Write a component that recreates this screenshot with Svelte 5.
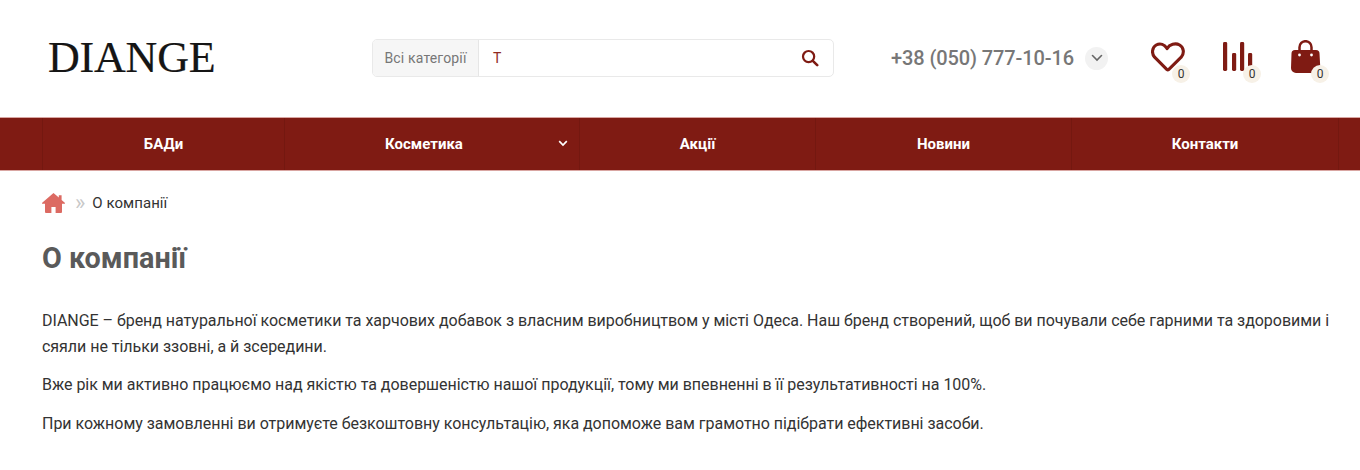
<script>
  const navItems = [
    { label: 'БАДи', width: 242 },
    { label: 'Косметика', width: 295, arrow: true },
    { label: 'Акції', width: 236 },
    { label: 'Новини', width: 256 },
    { label: 'Контакти', width: 268 }
  ];
  const tools = ['heart', 'chart', 'bag'];
</script>

<div class="page">
  <header class="top">
    <div class="logo">DIANGE</div>
    <div class="search">
      <div class="cat">Всі категорії</div>
      <div class="field">
        <span class="typed">Т</span>
        <svg class="glass" viewBox="0 0 18 18" width="18" height="18" aria-hidden="true">
          <circle cx="7.6" cy="7.6" r="5.6" fill="none" stroke="#7f1b13" stroke-width="2.2" />
          <path d="M11.8 11.8 L16.2 16.2" stroke="#7f1b13" stroke-width="2.6" stroke-linecap="round" />
        </svg>
      </div>
    </div>
    <div class="phone">
      <span>+38 (050) 777-10-16</span>
      <span class="drop">
        <svg viewBox="0 0 12 8" width="12" height="8" aria-hidden="true">
          <path d="M1.5 1.5 L6 6 L10.5 1.5" fill="none" stroke="#666" stroke-width="1.6" stroke-linecap="round" />
        </svg>
      </span>
    </div>
    <div class="tools">
      {#each tools as t}
        <div class="tool {t}">
          {#if t === 'heart'}
            <svg viewBox="0 0 34 30" width="34" height="30" aria-hidden="true">
              <path d="M16 27.6 L3.6 15.2 C0.2 11.2 1.2 5.2 5.2 3 C9.2 0.8 13.6 2.4 16 6.6 C18.6 2.4 24.4 0.6 28.6 3 C32.8 5.4 33.6 11.2 30.2 15.2 L17.6 27.6 Q16.8 28.3 16 27.6 Z" fill="none" stroke="#7f1b13" stroke-width="3.1" stroke-linejoin="round" />
            </svg>
          {:else if t === 'chart'}
            <svg viewBox="0 0 31 30" width="31" height="30" aria-hidden="true">
              <rect x="0" y="0" width="4.2" height="29" rx="1.4" fill="#7f1b13" />
              <rect x="9" y="11" width="4.2" height="18" rx="1.4" fill="#7f1b13" />
              <rect x="17" y="0" width="4.2" height="29" rx="1.4" fill="#7f1b13" />
              <rect x="25" y="11" width="4.2" height="18" rx="1.4" fill="#7f1b13" />
            </svg>
          {:else}
            <svg viewBox="0 0 30 34" width="30" height="34" aria-hidden="true">
              <path d="M8.5 12 V7.2 a6 6 0 0 1 12 0 V12" fill="none" stroke="#7f1b13" stroke-width="2.5" />
              <path d="M4 10 H25 a3.5 3.5 0 0 1 3.5 3.5 L29.3 28 a5 5 0 0 1 -5 5 H5 a5 5 0 0 1 -5 -5 L0.5 13.5 a3.5 3.5 0 0 1 3.5 -3.5 Z" fill="#7f1b13" />
              <circle cx="8.5" cy="15" r="1.4" fill="#fff" />
              <circle cx="20.5" cy="15" r="1.4" fill="#fff" />
            </svg>
          {/if}
          <span class="count">0</span>
        </div>
      {/each}
    </div>
  </header>

  <nav class="nav">
    <div class="nav-inner">
      {#each navItems as item}
        <a class="nav-item" class:has-arrow={item.arrow} href="#top" style="width: {item.width}px">
          {item.label}
          {#if item.arrow}
            <svg class="nav-arrow" viewBox="0 0 10 7" width="10" height="7" aria-hidden="true">
              <path d="M1.2 1.2 L5 5 L8.8 1.2" fill="none" stroke="#fff" stroke-width="1.7" />
            </svg>
          {/if}
        </a>
      {/each}
    </div>
  </nav>

  <main class="content">
    <div class="crumbs">
      <svg viewBox="0 0 23 20" width="23" height="20" aria-hidden="true">
        <path d="M11.5 0 L16.8 4.6 V2.2 H19.6 V7 L22.8 9.8 Q23.4 10.8 22.4 10.8 H20 V19 Q20 20 19 20 H13.6 V14 H9.4 V20 H4 Q3 20 3 19 V10.8 H0.6 Q-0.4 10.8 0.2 9.8 Z" fill="#dc6a62" />
      </svg>
      <span class="sep">»</span>
      <span class="here">О компанії</span>
    </div>
    <h1>О компанії</h1>
    <p>DIANGE – бренд натуральної косметики та харчових добавок з власним виробництвом у місті Одеса. Наш бренд створений, щоб ви почували себе гарними та здоровими і сяяли не тільки ззовні, а й зсередини.</p>
    <p>Вже рік ми активно працюємо над якістю та довершеністю нашої продукції, тому ми впевненні в її результативності на 100%.</p>
    <p>При кожному замовленні ви отримуєте безкоштовну консультацію, яка допоможе вам грамотно підібрати ефективні засоби.</p>
  </main>
</div>

<style>
  :global(body) {
    margin: 0;
    background: #fff;
    font-family: Roboto, "Noto Sans", sans-serif;
    color: #333;
  }
  .page {
    width: 1360px;
    height: 470px;
    overflow: hidden;
  }
  .top {
    height: 117px;
    display: flex;
    align-items: center;
    padding-left: 48px;
    box-sizing: border-box;
  }
  .logo {
    font-family: "Liberation Serif", serif;
    font-size: 44px;
    line-height: 1;
    color: #151515;
    width: 324px;
    margin-top: -1px;
    -webkit-text-stroke: 0.2px #151515;
    letter-spacing: -0.2px;
  }
  .search {
    display: flex;
    width: 462px;
    height: 38px;
    margin-top: -1px;
    border: 1px solid #e9e9e9;
    border-radius: 5px;
    box-sizing: border-box;
    overflow: hidden;
  }
  .cat {
    width: 106px;
    background: #f6f6f6;
    border-right: 1px solid #e6e6e6;
    color: #777;
    font-size: 14px;
    letter-spacing: 0.15px;
    display: flex;
    align-items: center;
    justify-content: center;
    box-sizing: border-box;
  }
  .field {
    flex: 1;
    display: flex;
    align-items: center;
    justify-content: space-between;
    padding: 0 14px;
  }
  .typed {
    color: #8f2a22;
    font-size: 14px;
  }
  .phone {
    margin-left: 57px;
    margin-bottom: 1px;
    display: flex;
    align-items: center;
    gap: 11px;
    font-size: 20px;
    font-weight: 500;
    letter-spacing: -0.1px;
    color: #777;
    width: 260px;
  }
  .drop {
    width: 23px;
    height: 23px;
    border-radius: 50%;
    background: #f2f2f2;
    display: flex;
    align-items: center;
    justify-content: center;
  }
  .tools {
    display: flex;
    gap: 37px;
  }
  .tool {
    position: relative;
    height: 34px;
    display: flex;
    align-items: flex-start;
  }
  .heart { width: 35px; }
  .chart { width: 31px; }
  .bag { width: 30px; }
  .heart svg { margin-top: 0.5px; }
  .chart svg { margin-top: 0.5px; }
  .bag svg { margin-top: -1.5px; }
  .count {
    position: absolute;
    left: 20px;
    top: 23px;
    width: 18px;
    height: 18px;
    border-radius: 50%;
    background: #f7f1e7;
    color: #333;
    font-size: 12px;
    line-height: 18px;
    text-align: center;
  }
  .heart .count { left: 21px; }
  .nav {
    height: 54px;
    background: #7f1b13;
    border-top: 1px solid #d9a6a2;
    border-bottom: 1px solid #d9a6a2;
    box-sizing: border-box;
    padding-left: 42px;
  }
  .nav-inner {
    display: flex;
    height: 100%;
  }
  .nav-item {
    position: relative;
    display: flex;
    align-items: center;
    justify-content: center;
    color: #fff;
    font-size: 15px;
    font-weight: 700;
    text-decoration: none;
    border-left: 1px solid #741810;
    box-sizing: border-box;
  }
  .has-arrow {
    padding-right: 16px;
  }
  .nav-item:last-child {
    border-right: 1px solid #741810;
  }
  .nav-arrow {
    position: absolute;
    right: 11px;
    top: 22px;
  }
  .content {
    padding: 0 20px 0 42px;
  }
  .crumbs {
    display: flex;
    align-items: center;
    height: 20px;
    margin-top: 22px;
    font-size: 15px;
  }
  .sep {
    color: #c8c8c8;
    font-size: 22px;
    line-height: 20px;
    margin-left: 10px;
    margin-right: 7px;
  }
  .here {
    color: #333;
    letter-spacing: 0.05px;
  }
  h1 {
    margin: 30px 0 35px;
    font-size: 28.8px;
    line-height: 30px;
    font-weight: 700;
    color: #5a5a5a;
  }
  p {
    margin: 0 0 13.2px;
    font-size: 16px;
    line-height: 25.6px;
    letter-spacing: -0.03px;
    color: #333;
  }
</style>
